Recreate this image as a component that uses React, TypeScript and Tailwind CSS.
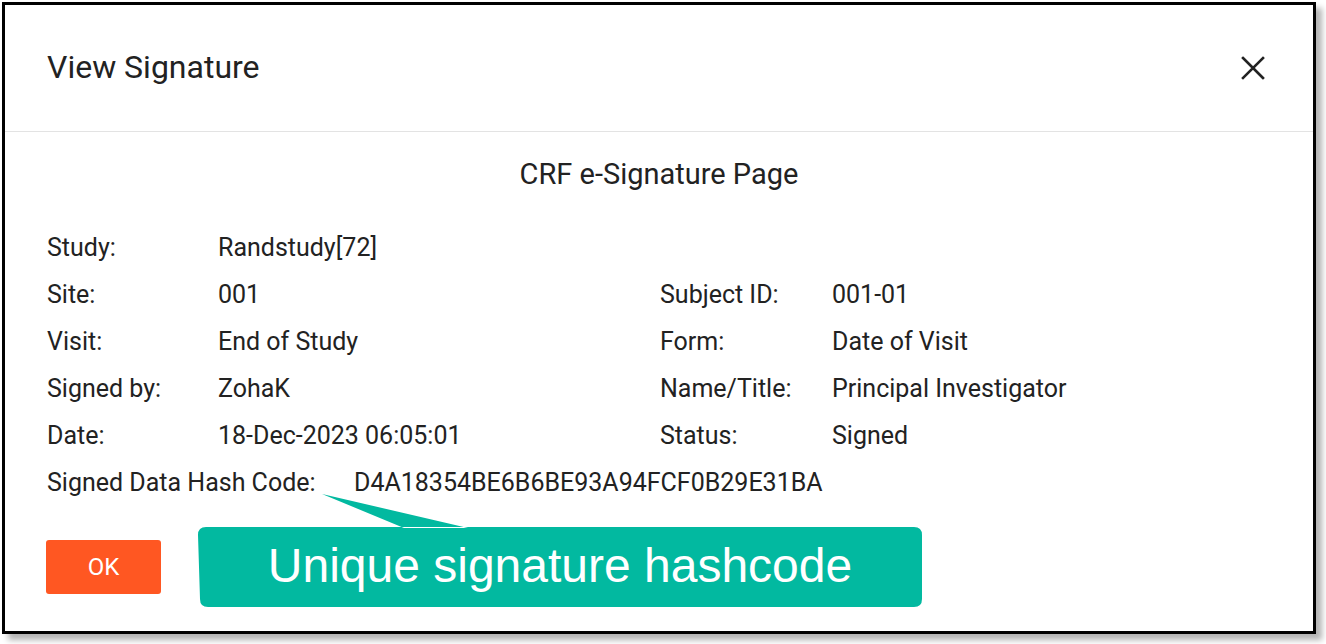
const rows: [string, string, string?, string?][] = [
  ["Study:", "Randstudy[72]"],
  ["Site:", "001", "Subject ID:", "001-01"],
  ["Visit:", "End of Study", "Form:", "Date of Visit"],
  ["Signed by:", "ZohaK", "Name/Title:", "Principal Investigator"],
  ["Date:", "18-Dec-2023 06:05:01", "Status:", "Signed"],
];

function Callout() {
  return (
    <div className="absolute left-[190px] top-[488px] w-[740px] h-[124px]">
      <svg width="740" height="124" viewBox="0 0 740 124" className="absolute inset-0" aria-hidden>
        <path
          d="M132 4 L214 38 L278 38 Z M16 37 H724 Q732 37 732 45 V109 Q732 117 724 117 H18 Q10 117 10 109 L8 45 Q8 37 16 37 Z"
          fill="#02b9a0"
        />
      </svg>
      <div className="absolute left-[8px] top-[37px] w-[724px] h-[80px] flex items-center justify-center">
        <span className="text-white text-[48px] leading-none font-['Liberation_Sans',Arial,sans-serif] pb-[2px]">
          Unique signature hashcode
        </span>
      </div>
    </div>
  );
}

export default function App() {
  return (
    <div className="relative w-[1326px] h-[644px] bg-white font-['Roboto',sans-serif] text-[#222]">
      <div className="ml-[2px] mt-[2px] w-[1314px] h-[632px] border-[3px] border-black bg-white shadow-[6px_6px_6px_rgba(0,0,0,0.3)] flex flex-col">
        <div className="h-[127px] shrink-0 border-b border-[#e3e3e3] flex items-center justify-between pl-[42px] pr-[48px]">
          <h2 className="text-[32px] leading-none font-normal pb-[2px]">View Signature</h2>
          <svg width="24" height="24" viewBox="0 0 24 24" aria-hidden>
            <path d="M2 2 L22 22 M22 2 L2 22" stroke="#222" strokeWidth="2.6" strokeLinecap="square" />
          </svg>
        </div>

        <div className="pl-[42px] pr-[42px]">
          <div className="mt-[26px] h-[32px] flex items-center justify-center text-[29px] leading-none">
            CRF e-Signature Page
          </div>

          <div className="mt-[34px] text-[25px]">
            {rows.map(([l1, v1, l2, v2]) => (
              <div key={l1} className="grid grid-cols-[171px_442px_172px_1fr] h-[47px] items-center">
                <span>{l1}</span>
                <span>{v1}</span>
                <span>{l2}</span>
                <span>{v2}</span>
              </div>
            ))}
            <div className="flex h-[47px] items-center">
              <span className="w-[307px]">Signed Data Hash Code:</span>
              <span>D4A18354BE6B6BE93A94FCF0B29E31BA</span>
            </div>
          </div>

          <button className="mt-[34px] -ml-[1px] w-[115px] h-[54px] rounded-[3px] bg-[#ff5722] text-white text-[24px] flex items-center justify-center">
            OK
          </button>
        </div>
      </div>
      <Callout />
    </div>
  );
}
